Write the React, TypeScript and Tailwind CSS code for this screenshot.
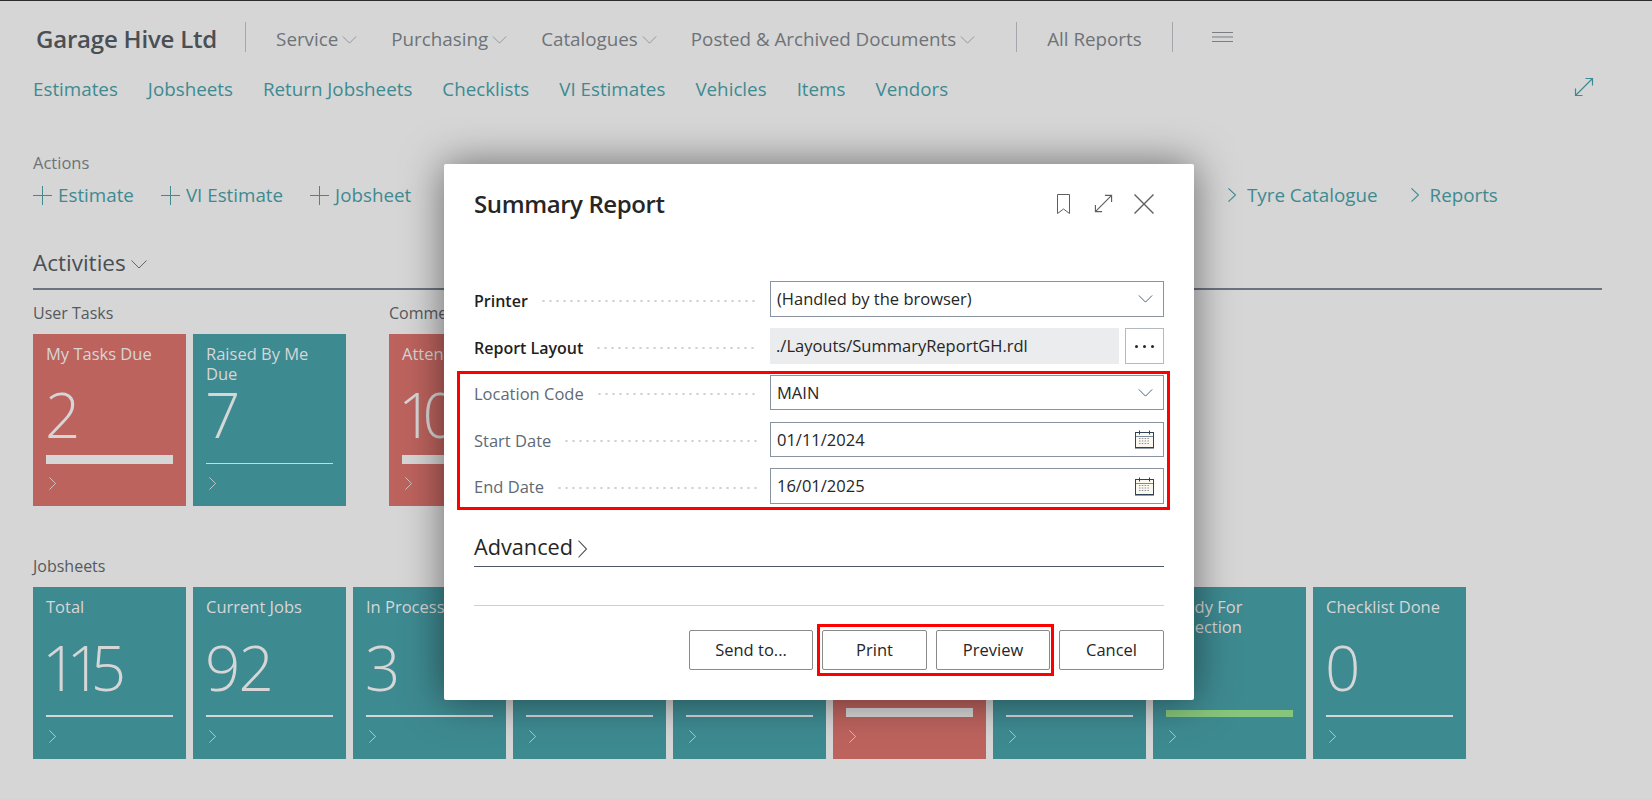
type TileProps = {
  label: string;
  value?: string;
  tone?: 'teal' | 'red';
  bar?: 'hair' | 'thin' | 'thick' | 'green';
  tight?: boolean;
};

function ChevronD({ className }: { className: string }) {
  return (
    <svg viewBox="0 0 16 9" fill="none" stroke="currentColor" strokeWidth="1" className={className}>
      <path d="M0.5 0.5 L8 8 L15.5 0.5" />
    </svg>
  );
}

function ChevronR({ className, weight = 1 }: { className: string; weight?: number }) {
  return (
    <svg viewBox="0 0 9 16" fill="none" stroke="currentColor" strokeWidth={weight} className={className} preserveAspectRatio="none">
      <path d="M0.5 0.5 L8.5 8 L0.5 15.5" />
    </svg>
  );
}

function Tile({ label, value = '', tone = 'teal', bar = 'thin', tight = false }: TileProps) {
  return (
    <div
      className={`w-[153px] h-[172px] shrink-0 px-[13px] flex flex-col text-[#d6d6d6] ${
        tone === 'red' ? 'bg-[#bd635e]' : 'bg-[#3e8a91]'
      }`}
    >
      <div className="h-[54px] pt-[10px] text-[16.5px] leading-[20px]">{label}</div>
      <div
        className={`h-[67px] text-[62px] leading-[52px] font-light ${
          tight ? 'tracking-[-11px] -ml-[4px]' : 'tracking-[-2px] -ml-[1px]'
        }`}
      >
        {value}
      </div>
      <div className="h-[9px] flex flex-col justify-end">
        {bar === 'hair' && <div className="h-px bg-[#d6d6d6]" />}
        {bar === 'thin' && <div className="h-[2px] bg-[#d6d6d6]" />}
        {bar === 'thick' && <div className="h-[9px] bg-[#d6d6d6]" />}
        {bar === 'green' && <div className="h-[7px] bg-[#86c57c]" />}
      </div>
      <ChevronR className="w-[7px] h-[13px] mt-[13px] ml-[3px] text-[#d6d6d6]" />
    </div>
  );
}

function MenuItem({ label }: { label: string }) {
  return (
    <span className="flex items-center">
      {label}
      <ChevronD className="w-[15px] h-[8px] ml-[4px] mt-[1px] text-[#8a8f94]" />
    </span>
  );
}

function PlusIcon() {
  return (
    <svg viewBox="0 0 19 19" className="w-[19px] h-[19px]" stroke="currentColor" fill="none">
      <path d="M9.5 0 V19 M0 9.5 H19" />
    </svg>
  );
}

function ActionLink({ label }: { label: string }) {
  return (
    <span className="flex items-center gap-[6px]">
      <PlusIcon />
      {label}
    </span>
  );
}

function LinkChevron({ label }: { label: string }) {
  return (
    <span className="flex items-center gap-[11px]">
      <ChevronR className="w-[8px] h-[14px]" weight={1.3} />
      {label}
    </span>
  );
}

function ExpandIcon({ className }: { className: string }) {
  return (
    <svg viewBox="0 0 20 20" fill="none" stroke="currentColor" strokeWidth="1.2" className={className}>
      <path d="M1.5 18.5 L18.5 1.5 M11.5 1.5 H18.5 V8.5 M1.5 11.5 V18.5 H8.5" />
    </svg>
  );
}

function CalendarIcon() {
  return (
    <svg viewBox="0 0 19 19" className="w-[19px] h-[19px]" fill="none">
      <rect x="0.5" y="2.5" width="18" height="15.5" fill="#fbf8f0" stroke="#2f4258" />
      <path d="M4.5 0.5 V4.5 M14.5 0.5 V4.5" stroke="#2f4258" />
      <path d="M1 6.5 H18" stroke="#7d8a96" />
      <path d="M0.5 17.5 H18.5" stroke="#2f4258" />
      <path
        d="M4 8.5 H15 M4 11 H15 M4 13.5 H15"
        stroke="#8a8f9c"
        strokeWidth="1"
        strokeDasharray="1.5 1.3"
      />
    </svg>
  );
}

function Field({
  label,
  strong = false,
  children,
  className = '',
}: {
  label: string;
  strong?: boolean;
  children: React.ReactNode;
  className?: string;
}) {
  return (
    <div className={`flex items-center ${className}`}>
      <div className="w-[296px] flex items-center shrink-0 pt-[3px]">
        <span className={`text-[16.5px] ${strong ? 'font-semibold text-[#1f1f1f] text-[16px]' : 'text-[#5e6a75]'}`}>
          {label}
        </span>
        <span className="flex-1 h-[4px] ml-[12px] mr-[13px] bg-[radial-gradient(circle,#cdd1d5_1px,transparent_1.3px)] bg-[length:7px_4px]" />
      </div>
      {children}
    </div>
  );
}

function InputBox({ value, icon }: { value: string; icon: 'select' | 'date' }) {
  return (
    <div className="flex-1 h-full border border-[#8a94a0] flex items-center justify-between pl-[5px] text-[16.5px] text-[#262626]">
      <span className="pt-[1px] pl-px">{value}</span>
      {icon === 'select' ? (
        <ChevronD className="w-[15px] h-[8px] mr-[10px] text-[#3c5068]" />
      ) : (
        <span className="mr-[9px] flex">
          <CalendarIcon />
        </span>
      )}
    </div>
  );
}

function DialogButton({ label, width }: { label: string; width: string }) {
  return (
    <button
      className={`${width} h-[40px] rounded-[2px] border border-[#8a8a8a] bg-white text-[16.5px] text-[#262626] font-medium`}
    >
      {label}
    </button>
  );
}

export default function App() {
  return (
    <div className="relative w-[1652px] h-[799px] overflow-hidden bg-[#d6d6d6] font-['Open_Sans',sans-serif]">
      <div className="h-px bg-[#2b2b2b]" />

      {/* Top navigation */}
      <nav className="mt-[21px] h-[30px] pl-[36px] flex items-center text-[18.8px] text-[#6d7378]">
        <span className="pt-[4px] text-[24px] font-semibold text-[#4a4f54] tracking-[-0.2px]">Garage Hive Ltd</span>
        <div className="w-px h-[30px] bg-[#a4a8ac] ml-[28px] mr-[30px]" />
        <div className="pt-[4px] flex items-center gap-[34px]">
          <MenuItem label="Service" />
          <MenuItem label="Purchasing" />
          <MenuItem label="Catalogues" />
          <MenuItem label="Posted & Archived Documents" />
        </div>
        <div className="w-px h-[30px] bg-[#a4a8ac] ml-[41px] mr-[30px]" />
        <span className="pt-[4px]">All Reports</span>
        <div className="w-px h-[30px] bg-[#a4a8ac] ml-[30px] mr-[39px]" />
        <svg viewBox="0 0 21 12" className="w-[21px] h-[12px]" stroke="#7a7f84" fill="none">
          <path d="M0 1.5 H21 M0 6 H21 M0 10.5 H21" />
        </svg>
      </nav>

      {/* Role links */}
      <div className="mt-[25px] pl-[33px] pr-[58px] h-[24px] flex items-center justify-between text-[18.8px] text-[#3e8a91]">
        <div className="flex items-center gap-[30px]">
          {['Estimates', 'Jobsheets', 'Return Jobsheets', 'Checklists', 'VI Estimates', 'Vehicles', 'Items', 'Vendors'].map(
            (l) => (
              <span key={l}>{l}</span>
            ),
          )}
        </div>
        <ExpandIcon className="w-[20px] h-[20px] -mt-[4px]" />
      </div>

      {/* Actions */}
      <div className="mt-[51px] pl-[33px] text-[16.5px] leading-[22px] text-[#6d7378]">Actions</div>
      <div className="mt-[9px] pl-[33px] h-[24px] flex items-center text-[18.8px] text-[#3e8a91]">
        <div className="flex items-center gap-[27px] w-[1195px]">
          <ActionLink label="Estimate" />
          <ActionLink label="VI Estimate" />
          <ActionLink label="Jobsheet" />
        </div>
        <div className="flex items-center gap-[33px]">
          <LinkChevron label="Tyre Catalogue" />
          <LinkChevron label="Reports" />
        </div>
      </div>

      {/* Activities */}
      <div className="mt-[43px] ml-[33px] mr-[50px] h-[40px] flex items-center border-b-2 border-[#6b7280] pb-[12px] text-[22.5px] font-medium text-[#4a4f54]">
        Activities
        <ChevronD className="w-[16px] h-[9px] ml-[5px] mt-[3px] text-[#5f656b]" />
      </div>

      <div className="mt-[13px] pl-[33px] flex gap-[43px] text-[16px] font-medium text-[#55595d] leading-[20px]">
        <div className="w-[313px]">User Tasks</div>
        <div>Comments</div>
      </div>
      <div className="mt-[11px] pl-[33px] flex gap-[43px]">
        <div className="flex gap-[7px]">
          <Tile label="My Tasks Due" value="2" tone="red" bar="thick" />
          <Tile label="Raised By Me Due" value="7" bar="hair" />
        </div>
        <div className="flex gap-[7px]">
          <Tile label="Attention" value="10" tone="red" bar="thick" tight />
        </div>
      </div>

      <div className="mt-[50px] pl-[33px] text-[16px] font-medium text-[#55595d] leading-[20px]">Jobsheets</div>
      <div className="mt-[11px] pl-[33px] flex gap-[7px]">
        <Tile label="Total" value="115" tight />
        <Tile label="Current Jobs" value="92" />
        <Tile label="In Process" value="3" />
        <Tile label="Awaiting Parts" />
        <Tile label="Awaiting Approval" />
        <Tile label="Overdue" tone="red" bar="thick" />
        <Tile label="Completed" />
        <Tile label="Ready For Collection" bar="green" />
        <Tile label="Checklist Done" value="0" />
      </div>

      {/* Report request dialog */}
      <div className="absolute left-[444px] top-[164px] w-[750px] h-[536px] bg-white rounded-[2px] shadow-[0_0_40px_rgba(0,0,0,0.5)] px-[30px]">
        <div className="h-[41px] mt-[19px] flex items-center justify-between">
          <h1 className="text-[24px] font-semibold text-[#262626] tracking-[-0.4px]">Summary Report</h1>
          <div className="flex items-center text-[#605e5c] mr-[10px]">
            <svg viewBox="0 0 13 20" className="w-[13px] h-[20px]" fill="none" stroke="currentColor">
              <path d="M0.5 0.5 H12.5 V19.5 L6.5 15 L0.5 19.5 Z" />
            </svg>
            <ExpandIcon className="w-[19px] h-[19px] ml-[24px]" />
            <svg viewBox="0 0 20 20" className="w-[20px] h-[20px] ml-[21px]" fill="none" stroke="currentColor" strokeWidth="1.4">
              <path d="M0.5 0.5 L19.5 19.5 M19.5 0.5 L0.5 19.5" />
            </svg>
          </div>
        </div>

        <div className="mt-[57px]">
          <Field label="Printer" strong className="h-[36px]">
            <InputBox value="(Handled by the browser)" icon="select" />
          </Field>
          <Field label="Report Layout" strong className="h-[36px] mt-[11px]">
            <div className="w-[349px] h-full bg-[#ebeced] flex items-center pl-[6px] text-[16.5px] text-[#262626]">
              ./Layouts/SummaryReportGH.rdl
            </div>
            <div className="w-[39px] h-full ml-[6px] border border-[#b4b9be] flex items-center justify-center gap-[5px]">
              <span className="w-[3px] h-[3px] rounded-full bg-[#262626]" />
              <span className="w-[3px] h-[3px] rounded-full bg-[#262626]" />
              <span className="w-[3px] h-[3px] rounded-full bg-[#262626]" />
            </div>
          </Field>

          <div className="mt-[7px] -ml-[17px] -mr-[6px] pl-[14px] pr-[3px] pt-[1px] pb-[3px] border-[3px] border-[#ff0000]">
            <Field label="Location Code" className="h-[35px]">
              <InputBox value="MAIN" icon="select" />
            </Field>
            <Field label="Start Date" className="h-[35px] mt-[12px]">
              <InputBox value="01/11/2024" icon="date" />
            </Field>
            <Field label="End Date" className="h-[36px] mt-[11px]">
              <InputBox value="16/01/2025" icon="date" />
            </Field>
          </div>
        </div>

        <div className="mt-[22px] h-[35px] border-b border-[#4d5766] flex items-center text-[21.7px] font-medium text-[#262626] pb-[3px]">
          Advanced
          <ChevronR className="w-[9px] h-[18px] ml-[5px] mt-[2px] text-[#4a4f54]" />
        </div>
        <div className="mt-[38px] h-px bg-[#cfcfcf]" />

        <div className="mt-[18px] h-[52px] flex items-center justify-end">
          <DialogButton label="Send to..." width="w-[124px]" />
          <div className="ml-[4px] flex items-center gap-[9px] h-[52px] pl-[2px] pr-px border-[3px] border-[#ff0000]">
            <DialogButton label="Print" width="w-[105px]" />
            <DialogButton label="Preview" width="w-[114px]" />
          </div>
          <div className="ml-[5px]">
            <DialogButton label="Cancel" width="w-[105px]" />
          </div>
        </div>
      </div>
    </div>
  );
}
